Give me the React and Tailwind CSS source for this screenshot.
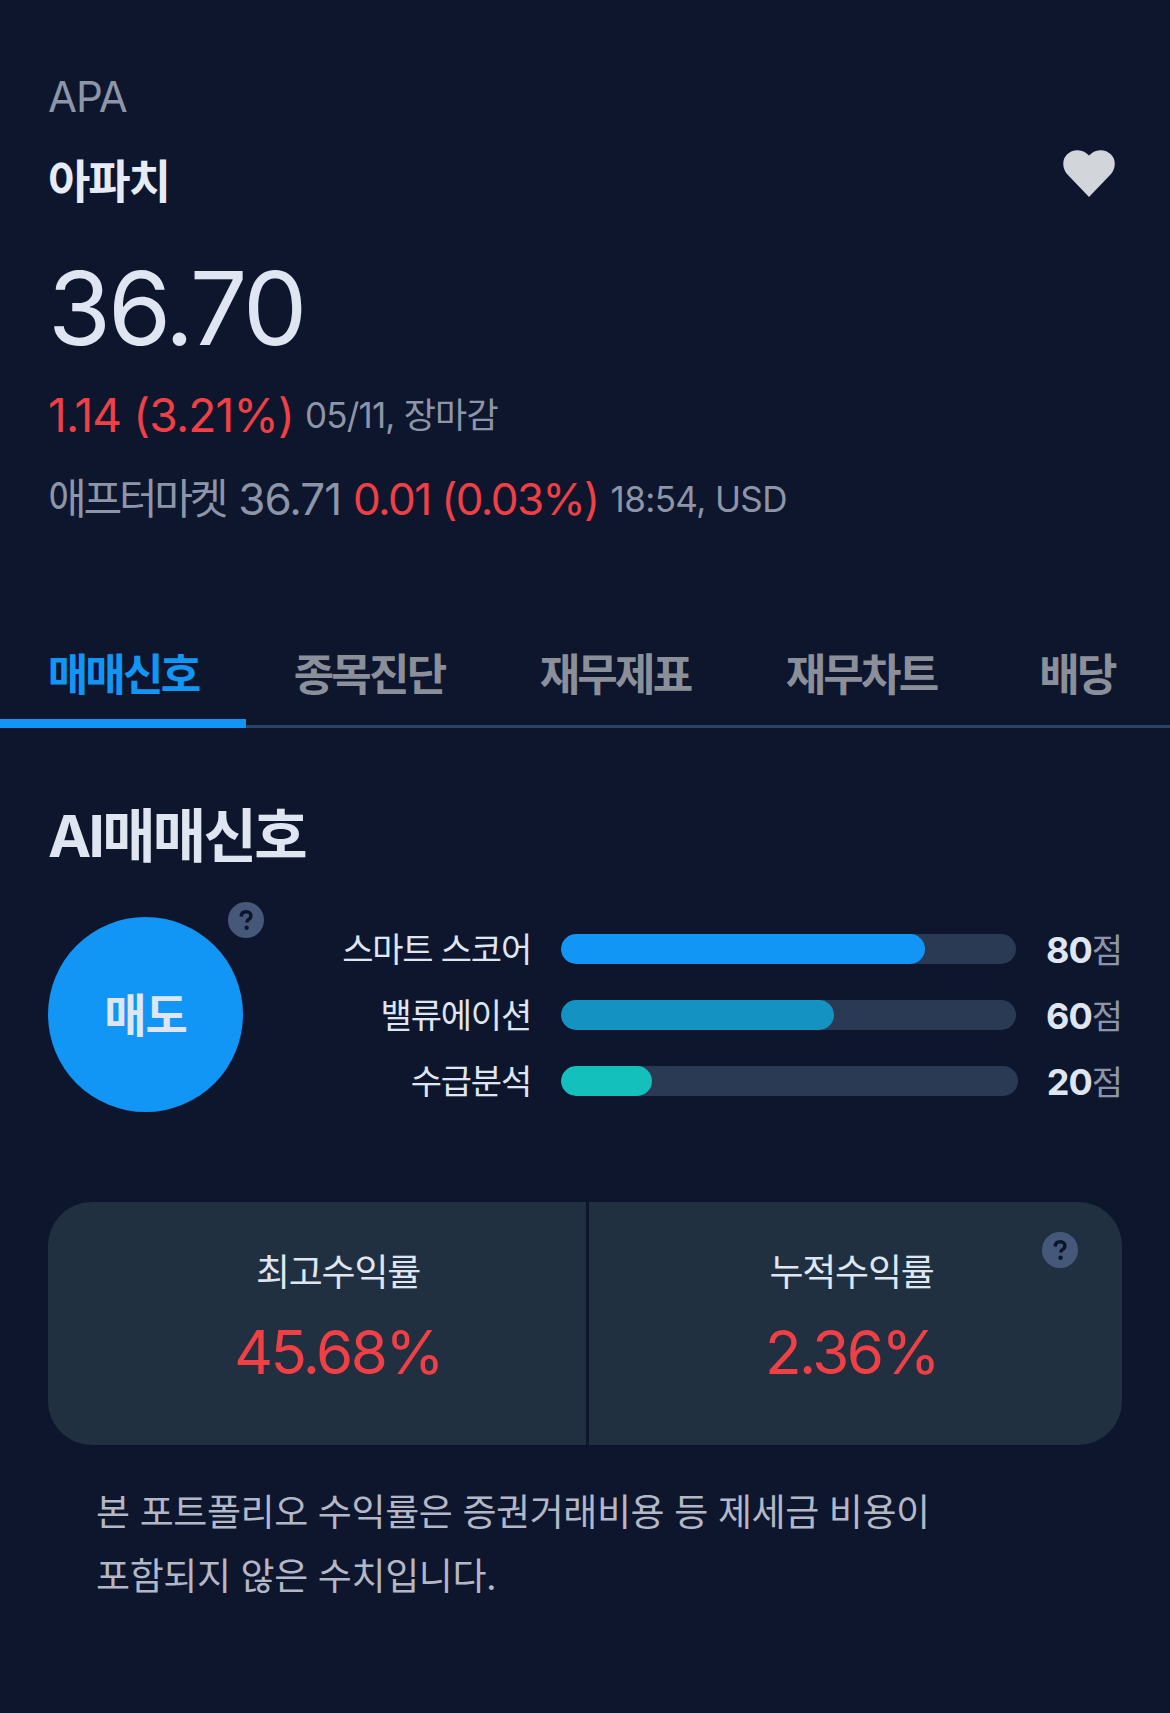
const F = "font-['Inter','Noto_Sans_CJK_KR',sans-serif]";

function Help({ className }) {
  return (
    <svg viewBox="0 0 36 36" className={className}>
      <circle cx="18" cy="18" r="18" fill="#46587a" />
      <path d="M13.2 14.6c.1-3 2.1-4.8 5-4.8 2.8 0 4.7 1.6 4.7 4 0 1.700-.8 2.800-2.300 3.700-1.300.8-1.700 1.300-1.700 2.500v.5" fill="none" stroke="#0d152b" strokeWidth="3.400" />
      <circle cx="18.600" cy="25.800" r="2.200" fill="#0d152b" />
    </svg>
  );
}

function Bar({ label, pct, end, color, score }) {
  return (
    <div className="flex h-[30px] items-center">
      <div className="w-[288px] pt-[3px] text-right text-[34px] leading-none tracking-[-1.200px] text-[#dfe6f2]">{label}</div>
      <div className={`ml-[30px] h-[30px] overflow-hidden rounded-full bg-[#2a3a55] ${end}`}>
        <div className={`h-full rounded-full ${pct} ${color}`} />
      </div>
      <div className="flex-1 pt-[3px] text-right text-[34px] leading-none tracking-[-1px] text-[#dfe6f2]">
        <span className="text-[36px] font-bold">{score}</span><span className="text-[#8d95a8]">점</span>
      </div>
    </div>
  );
}

function Stat({ label, value, className, children }) {
  return (
    <div className={`relative pt-[49px] text-center ${className}`}>
      <div className="text-[37px] leading-[44px] tracking-[-1.200px] text-[#dfe6f2]">{label}</div>
      <div className="mt-[22px] text-[60px] leading-[70px] tracking-[-2.500px] text-[#f04045]">{value}</div>
      {children}
    </div>
  );
}

export default function App() {
  const tabs = ["매매신호", "종목진단", "재무제표", "재무차트", "배당"];
  return (
    <div className={`${F} min-h-[1713px] w-[1170px] overflow-hidden bg-[#0e162e]`}>
      <section className="px-[48px] pt-[72px]">
        <div className="text-[42px] leading-[50px] tracking-[-1px] text-[#8d95a8]">APA</div>
        <div className="mt-[32px] flex items-start justify-between">
          <div className="text-[46px] font-bold leading-[54px] tracking-[-2px] text-[#e6ebf5]">아파치</div>
          <svg viewBox="0 0 52 47" className="mr-[7px] mt-[-4px] h-[47px] w-[52px]" fill="#d2d6db">
            <path d="M26 47 4 24C-1 18-1 9 4 4.500 9-1 18-1 23 3l3 2.500L29 3C34-1 43-1 48 4.500 53 9 53 18 48 24Z" />
          </svg>
        </div>
        <div className="mt-[50px] text-[102px] leading-[100px] tracking-[-3px] text-[#dfe6f2]">36.70</div>
        <div className="mt-[27px] flex items-center whitespace-pre leading-[60px]">
          <span className="text-[46px] tracking-[-0.800px] text-[#f04045]">1.14 (3.21%)</span>
          <span className="ml-[11px] text-[35px] tracking-[-0.800px] text-[#8d95a8]">05/11, 장마감</span>
        </div>
        <div className="mt-[24px] flex items-center whitespace-pre leading-[60px]">
          <span className="text-[42px] tracking-[-3.200px] text-[#8d95a8]">애프터마켓</span>
          <span className="ml-[13px] text-[44px] tracking-[-1px] text-[#8d95a8]">36.71</span>
          <span className="ml-[12px] text-[44px] tracking-[-1.600px] text-[#f04045]">0.01 (0.03%)</span>
          <span className="ml-[12px] text-[35px] tracking-[-0.600px] text-[#8d95a8]">18:54, USD</span>
        </div>
      </section>

      <nav className="mt-[102px] flex h-[97px] border-b-[3px] border-[#2a4266]">
        {tabs.map((t, i) => (
          <div key={t} className={`relative pt-[19px] text-center text-[44px] font-bold leading-[50px] tracking-[-2.800px] ${i === 4 ? "flex-1" : "w-[246px]"} ${i === 0 ? "text-[#1296f6]" : "text-[#8a8f99]"}`}>
            {t}
            {i === 0 && <div className="absolute inset-x-0 bottom-[-3px] h-[9px] bg-[#1296f6]" />}
          </div>
        ))}
      </nav>

      <section className="px-[48px]">
        <h2 className="mt-[75px] text-[58px] font-bold leading-[66px] tracking-[-2.700px] text-[#dfe6f2]">AI매매신호</h2>
        <div className="relative mt-[48px] flex items-center">
          <div className="flex h-[195px] w-[195px] shrink-0 items-center justify-center rounded-full bg-[#1296f6] pt-[2px] text-[46px] font-bold tracking-[-1px] text-[#dfe6f2]">매도</div>
          <Help className="absolute left-[180px] top-[-15px] h-[36px] w-[36px]" />
          <div className="flex flex-1 flex-col gap-[36px]">
            <Bar label="스마트 스코어" pct="w-[80%]" end="w-[455px]" color="bg-[#1296f6]" score="80" />
            <Bar label="밸류에이션" pct="w-[60%]" end="w-[455px]" color="bg-[#1493c3]" score="60" />
            <Bar label="수급분석" pct="w-[20%]" end="w-[457px]" color="bg-[#13c0bc]" score="20" />
          </div>
        </div>

        <div className="relative mt-[90px] flex h-[243px] rounded-[44px] bg-[#213041]">
          <Stat label="최고수익률" value="45.68%" className="w-[538px] shrink-0 pl-[42px]" />
          <div className="w-[3px] shrink-0 bg-[#0e162e]" />
          <Stat label="누적수익률" value="2.36%" className="flex-1 pr-[8px]">
            <Help className="absolute right-[44px] top-[30px] h-[36px] w-[36px]" />
          </Stat>
        </div>

        <p className="mt-[36px] pl-[48px] text-[37px] leading-[64px] tracking-[-0.400px] text-[#b3b7c6]">
          본 포트폴리오 수익률은 증권거래비용 등 제세금 비용이<br />포함되지 않은 수치입니다.
        </p>
      </section>
    </div>
  );
}
